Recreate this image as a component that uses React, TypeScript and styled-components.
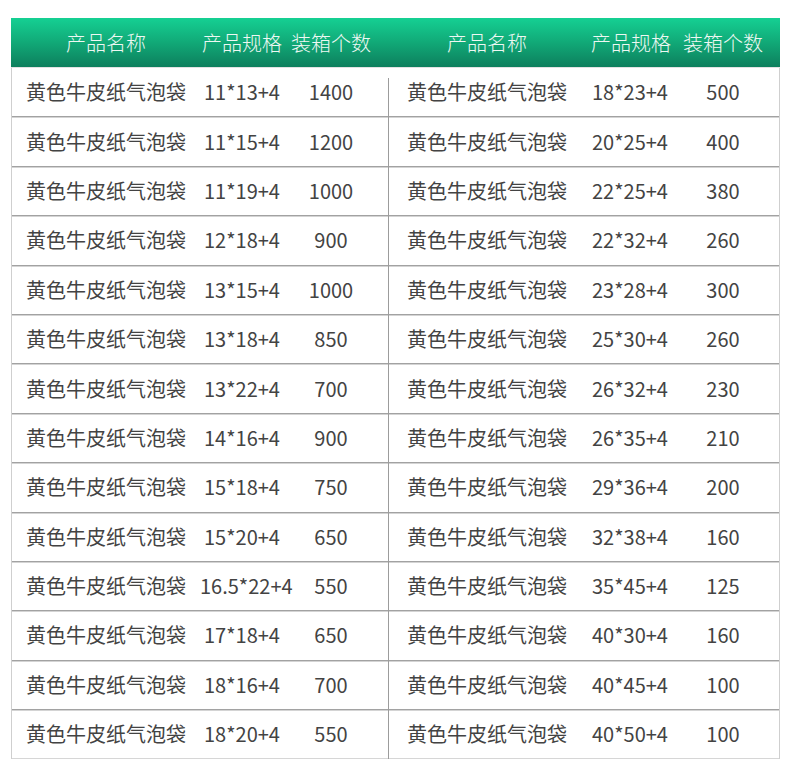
import styled, { createGlobalStyle } from "styled-components";

const GlobalStyle = createGlobalStyle`
    body {
        margin: 0;
        background: #ffffff;
        font-family: "Noto Sans CJK SC", "Noto Sans", sans-serif;
    }
`

type Item = { spec: string; qty: string };

const NAME = "黄色牛皮纸气泡袋";

const leftItems: Item[] = [
    {spec: "11*13+4", qty: "1400"},
    {spec: "11*15+4", qty: "1200"},
    {spec: "11*19+4", qty: "1000"},
    {spec: "12*18+4", qty: "900"},
    {spec: "13*15+4", qty: "1000"},
    {spec: "13*18+4", qty: "850"},
    {spec: "13*22+4", qty: "700"},
    {spec: "14*16+4", qty: "900"},
    {spec: "15*18+4", qty: "750"},
    {spec: "15*20+4", qty: "650"},
    {spec: "16.5*22+4", qty: "550"},
    {spec: "17*18+4", qty: "650"},
    {spec: "18*16+4", qty: "700"},
    {spec: "18*20+4", qty: "550"},
];

const rightItems: Item[] = [
    {spec: "18*23+4", qty: "500"},
    {spec: "20*25+4", qty: "400"},
    {spec: "22*25+4", qty: "380"},
    {spec: "22*32+4", qty: "260"},
    {spec: "23*28+4", qty: "300"},
    {spec: "25*30+4", qty: "260"},
    {spec: "26*32+4", qty: "230"},
    {spec: "26*35+4", qty: "210"},
    {spec: "29*36+4", qty: "200"},
    {spec: "32*38+4", qty: "160"},
    {spec: "35*45+4", qty: "125"},
    {spec: "40*30+4", qty: "160"},
    {spec: "40*45+4", qty: "100"},
    {spec: "40*50+4", qty: "100"},
];

const Half = ({items, cols}: { items: Item[]; cols: string }) => (
    <StyledHalf>
        {items.map((item, i) => (
            <Row key={i} $cols={cols}>
                <Cell>{NAME}</Cell>
                <Cell>{item.spec}</Cell>
                <Cell>{item.qty}</Cell>
            </Row>
        ))}
    </StyledHalf>
);

export default function App() {
    return (
        <>
            <GlobalStyle/>
            <Table>
                <Header>
                    <HeadCell>产品名称</HeadCell>
                    <HeadCell>产品规格</HeadCell>
                    <HeadCell>装箱个数</HeadCell>
                    <span/>
                    <HeadCell>产品名称</HeadCell>
                    <HeadCell>产品规格</HeadCell>
                    <HeadCell>装箱个数</HeadCell>
                </Header>
                <Body>
                    <Half items={leftItems} cols={"188px 84px 94px 10px"}/>
                    <Divider/>
                    <Half items={rightItems} cols={"196px 90px 96px 8px"}/>
                </Body>
            </Table>
        </>
    );
}

const Table = styled.div`
    width: 769px;
    margin: 18px 0 0 11px;
`

const Header = styled.div`
    display: grid;
    grid-template-columns: 190px 82px 96px 10px 196px 92px 92px 11px;
    align-items: center;
    height: 49px;
    background: linear-gradient(180deg, #15d093 0%, #11a977 50%, #0d7f5d 100%);
    border-bottom: 1px solid #e2e2e2;
`

const HeadCell = styled.div`
    text-align: center;
    font-size: 20px;
    font-weight: 300;
    line-height: 1;
    color: #eef8f3;
    white-space: nowrap;
`

const Body = styled.div`
    display: flex;
    border-left: 1px solid #cfcfcf;
    border-right: 1px solid #cfcfcf;
`

const StyledHalf = styled.div`
    display: flex;
    flex-direction: column;
    flex: 0 0 auto;
`

const Divider = styled.div`
    width: 1px;
    margin-top: 10px;
    background: #9c9c9c;
`

const Row = styled.div<{ $cols: string }>`
    display: grid;
    grid-template-columns: ${p => p.$cols};
    align-items: center;
    box-sizing: border-box;
    height: 49.4px;
    border-bottom: 1px solid #a2a2a2;
    box-shadow: 0 1px 0 #d4d4d4;

    &:last-child {
        border-bottom-color: #d6d6d6;
        box-shadow: 0 1px 0 #e2e2e2;
    }
`

const Cell = styled.div`
    text-align: center;
    font-size: 20px;
    line-height: 1;
    color: #434343;
    white-space: nowrap;
`
